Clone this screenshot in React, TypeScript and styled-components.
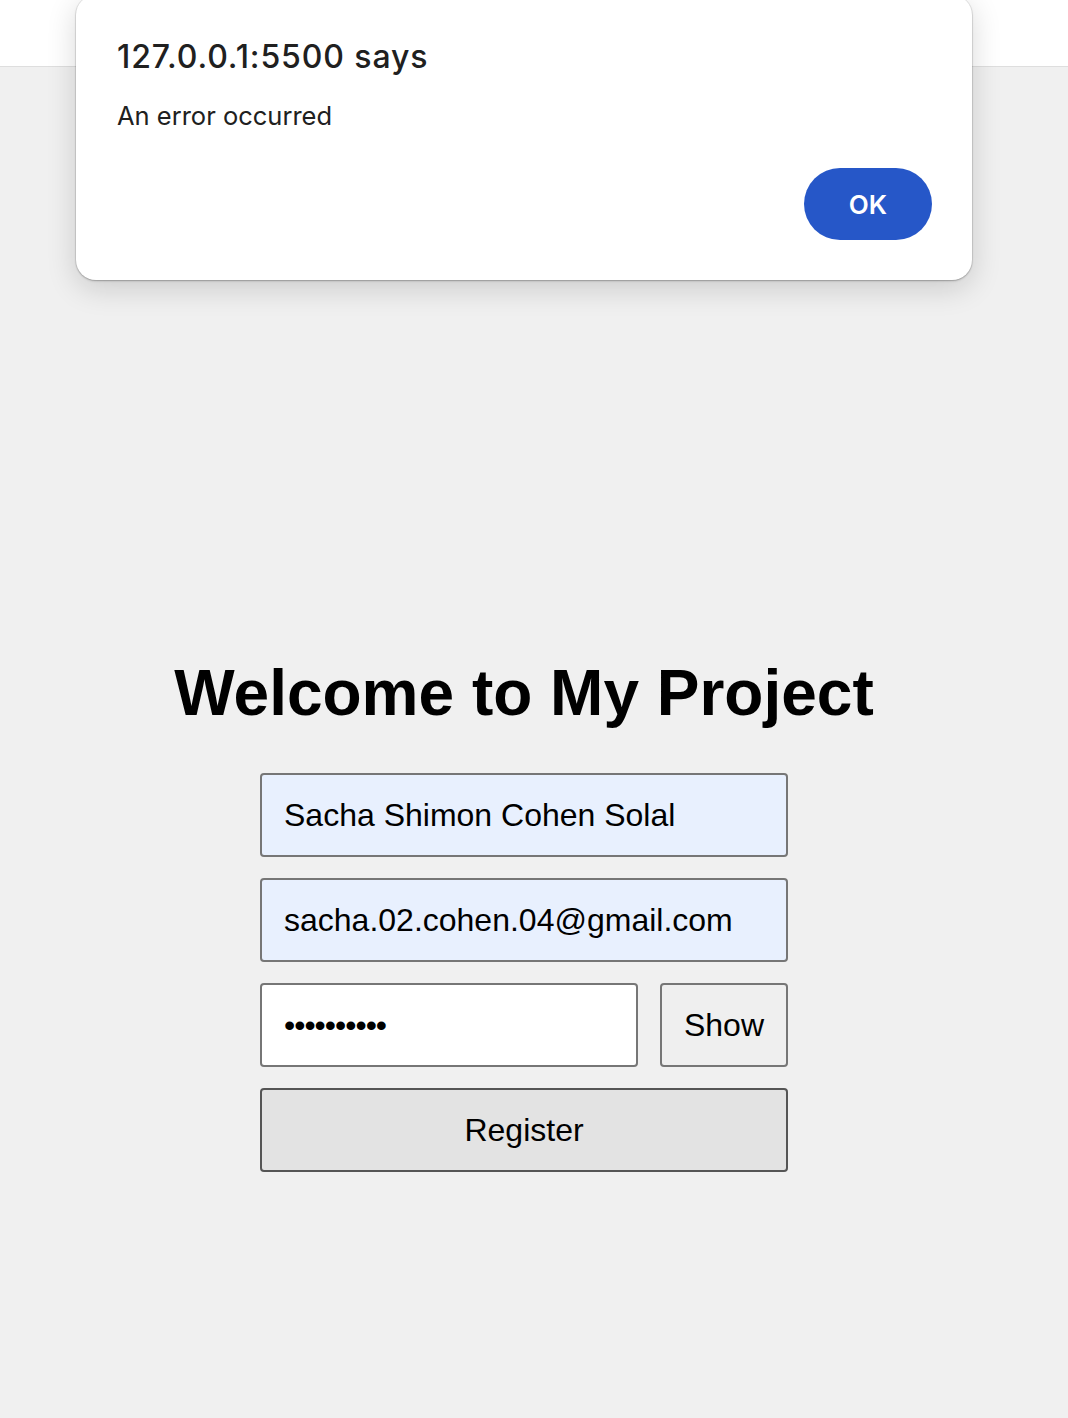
import { createGlobalStyle } from "styled-components";
import styled from "styled-components";

const GlobalStyle = createGlobalStyle`
  html, body {
    margin: 0;
    padding: 0;
    background: #f0f0f0;
    font-family: "Liberation Sans", Arial, sans-serif;
  }
`;

const Page = styled.div`
  position: relative;
  min-height: 1418px;
  background: #f0f0f0;
`;

const TopBar = styled.div`
  height: 66px;
  background: #ffffff;
  border-bottom: 1px solid #dedede;
`;

const Main = styled.main`
  width: 1048px;
  padding-top: 589px;
  display: flex;
  flex-direction: column;
  align-items: center;
`;

const Title = styled.h1`
  margin: 0 0 43px;
  font-size: 64px;
  font-weight: 700;
  color: #000;
  line-height: normal;
`;

const Form = styled.form`
  width: 528px;
  display: flex;
  flex-direction: column;
  gap: 21px;
`;

const Row = styled.div`
  display: flex;
  gap: 22px;
`;

const Input = styled.input<{ $autofill?: boolean }>`
  box-sizing: border-box;
  display: block;
  width: 100%;
  min-width: 0;
  height: 84px;
  margin: 0;
  padding: 0 22px;
  border: 2px solid #767676;
  border-radius: 4px;
  background: ${(props) => (props.$autofill ? "#e8f0fe" : "#ffffff")};
  font-family: "Liberation Sans", Arial, sans-serif;
  font-size: 32px;
  color: #000;
  outline: none;
`;

const PasswordInput = styled(Input)`
  flex: 1;
  letter-spacing: -1px;
`;

const Button = styled.button<{ $wide?: boolean }>`
  box-sizing: border-box;
  height: 84px;
  width: ${(props) => (props.$wide ? "100%" : "128px")};
  flex-shrink: 0;
  margin: 0;
  padding: 0;
  border: 2px solid ${(props) => (props.$wide ? "#555555" : "#767676")};
  border-radius: 4px;
  background: ${(props) => (props.$wide ? "#e3e3e3" : "#efefef")};
  font-family: "Liberation Sans", Arial, sans-serif;
  font-size: 32px;
  color: #000;
`;

const Dialog = styled.div`
  position: absolute;
  top: -5px;
  left: 76px;
  box-sizing: border-box;
  width: 896px;
  height: 285px;
  padding: 43px 40px 40px 41px;
  display: flex;
  flex-direction: column;
  background: #ffffff;
  border-radius: 20px;
  box-shadow: 0 0 0 1px rgba(0, 0, 0, 0.06), 0 1px 2px rgba(0, 0, 0, 0.25),
    0 8px 30px rgba(0, 0, 0, 0.16);
  font-family: Inter, "Open Sans", sans-serif;
  color: #202020;
`;

const DialogTitle = styled.div`
  font-size: 32px;
  line-height: 38px;
  font-weight: 500;
  letter-spacing: 0.9px;
`;

const DialogMessage = styled.div`
  margin-top: 24px;
  font-size: 25.5px;
  line-height: 32px;
  font-weight: 400;
`;

const DialogActions = styled.div`
  margin-top: auto;
  display: flex;
  justify-content: flex-end;
`;

const OkButton = styled.button`
  width: 128px;
  height: 72px;
  border: none;
  border-radius: 36px;
  background: #2657c8;
  color: #ffffff;
  font-family: Inter, "Open Sans", sans-serif;
  font-size: 26px;
  font-weight: 600;
`;

export default function App() {
  return (
    <Page>
      <GlobalStyle />
      <TopBar />
      <Main>
        <Title>Welcome to My Project</Title>
        <Form onSubmit={(e) => e.preventDefault()}>
          <Input $autofill readOnly value="Sacha Shimon Cohen Solal" />
          <Input $autofill readOnly value="sacha.02.cohen.04@gmail.com" />
          <Row>
            <PasswordInput type="password" readOnly value="0123456789" />
            <Button type="button">Show</Button>
          </Row>
          <Button $wide type="submit">
            Register
          </Button>
        </Form>
      </Main>
      <Dialog role="alertdialog">
        <DialogTitle>127.0.0.1:5500 says</DialogTitle>
        <DialogMessage>An error occurred</DialogMessage>
        <DialogActions>
          <OkButton type="button">OK</OkButton>
        </DialogActions>
      </Dialog>
    </Page>
  );
}
